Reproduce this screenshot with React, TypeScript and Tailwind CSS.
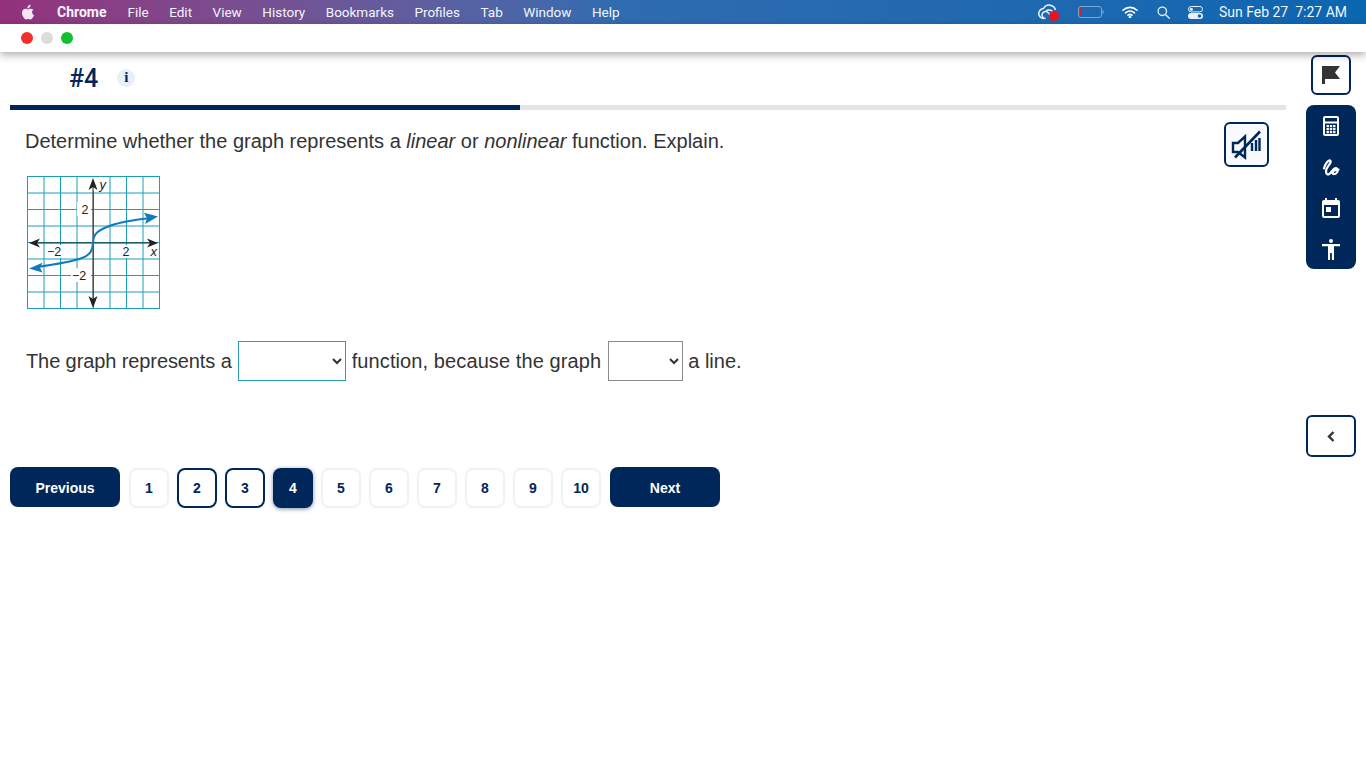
import React from 'react';

const pages = [1, 2, 3, 4, 5, 6, 7, 8, 9, 10];
const visited = [2, 3];
const current = 4;
const menus = ['File', 'Edit', 'View', 'History', 'Bookmarks', 'Profiles', 'Tab', 'Window', 'Help'];

const AppleLogo = () => (
  <svg width="14" height="16" viewBox="0 0 14 16" fill="#f3e6f0">
    <path d="M9.6 0.6c.1 1.1-.3 2-.9 2.7-.6.7-1.5 1.2-2.4 1.1-.1-1 .4-2 .9-2.6C7.800 1.100 8.800.7 9.600.6zM12.700 5.500c-1 .6-1.600 1.500-1.600 2.700 0 1.400.8 2.400 2 2.900-.3 1-.8 1.900-1.400 2.700-.6.800-1.200 1.600-2.100 1.600-.9 0-1.200-.5-2.300-.5-1.100 0-1.400.5-2.300.5-.9 0-1.500-.8-2.100-1.700C1.700 12.500 1 10.600 1 8.900c0-2.700 1.700-4.100 3.400-4.100.9 0 1.700.6 2.300.6.600 0 1.500-.7 2.600-.7 1 0 2 .4 3.400.8z" />
  </svg>
);

const StatusIcons = () => (
  <div className="flex items-center">
    {/* creative cloud with red dot */}
    <div className="relative w-[22px] h-[16px]">
      <svg width="22" height="16" viewBox="0 0 22 16" fill="none" stroke="#eef4fa" strokeWidth="1.500">
        <path d="M6 14.500a5 5 0 0 1-.5-10A6.500 6.500 0 0 1 17.500 6" />
        <path d="M7.500 14.500a3.500 3.500 0 1 1 2.800-5.600L13.500 12.500" />
        <path d="M8 7a5 5 0 0 1 7 1" />
      </svg>
      <span className="absolute right-[1px] bottom-[-1px] w-[10px] h-[10px] rounded-full bg-[#f01020]" />
    </div>
    {/* battery */}
    <svg className="ml-[18px]" width="27" height="12" viewBox="0 0 27 12" fill="none">
      <rect x="0.500" y="0.500" width="23" height="11" rx="2.500" stroke="#7fa8d0" />
      <rect x="2" y="2" width="2" height="8" fill="#d0222c" />
      <path d="M25 4.500v3" stroke="#7fa8d0" strokeWidth="1.200" />
    </svg>
    {/* wifi */}
    <svg className="ml-[17px]" width="16" height="12" viewBox="0 0 16 12" fill="none" stroke="#fff" strokeWidth="1.600" strokeLinecap="round">
      <path d="M1 4.200a10 10 0 0 1 14 0" />
      <path d="M3.500 6.800a6.500 6.500 0 0 1 9 0" />
      <path d="M6 9.200a3 3 0 0 1 4 0" />
      <circle cx="8" cy="11" r="0.600" fill="#fff" />
    </svg>
    {/* search */}
    <svg className="ml-[19px]" width="13" height="13" viewBox="0 0 13 13" fill="none" stroke="#e8f1f8" strokeWidth="1.300">
      <circle cx="5.300" cy="5.300" r="4.200" />
      <path d="M8.500 8.500l3.800 3.800" strokeLinecap="round" />
    </svg>
    {/* control centre */}
    <svg className="ml-[18px]" width="15" height="13" viewBox="0 0 15 13" fill="none">
      <rect x="0.500" y="0.500" width="14" height="5.400" rx="2.700" stroke="#e8f1f8" />
      <circle cx="3.400" cy="3.200" r="1.500" fill="#e8f1f8" />
      <rect x="0" y="7" width="15" height="6" rx="3" fill="#e8f1f8" />
      <circle cx="11.500" cy="10" r="1.800" fill="#0a66b0" />
    </svg>
  </div>
);

const Graph = () => {
  const lines = [2.500, 19, 35.500, 52, 68.500, 85, 101.500, 118, 134.500];
  return (
    <svg width="136" height="136" viewBox="0 0 136 136" className="block">
      {lines.map((p) => (
        <React.Fragment key={p}>
          <line x1={p} y1="1" x2={p} y2="133.500" stroke="#1b9fb6" strokeWidth="1" />
          <line x1="2" y1={p - 1} x2="135" y2={p - 1} stroke="#1b9fb6" strokeWidth="1" />
        </React.Fragment>
      ))}
      <rect x="58" y="2" width="20" height="14" fill="#fff" />
      <rect x="52" y="27" width="14" height="14" fill="#fff" />
      <rect x="20" y="70" width="22" height="13" fill="#fff" />
      <rect x="95" y="70" width="12" height="13" fill="#fff" />
      <rect x="122" y="70" width="11" height="13" fill="#fff" />
      <rect x="46" y="93" width="20" height="14" fill="#fff" />
      {/* axes */}
      <line x1="8" y1="68" x2="130" y2="68" stroke="#222" strokeWidth="1" />
      <line x1="68" y1="8" x2="68" y2="128" stroke="#222" strokeWidth="1" />
      <path d="M4 68l11-4.500-3 4.500 3 4.500z" fill="#222" />
      <path d="M133 68l-11-4.500 3 4.500-3 4.500z" fill="#222" />
      <path d="M68 3l-4.500 12 4.500-3 4.500 3z" fill="#222" />
      <path d="M68 133l-4.500-12 4.500 3 4.500-3z" fill="#222" />
      {/* curve */}
      <path
        d="M122 43.500C105 45.500 92 47.500 82 52 72 56 68.500 59 68 68 67.500 76 65 80 57 83 47 86.500 30 89.500 12 92"
        fill="none"
        stroke="#1279bd"
        strokeWidth="2"
      />
      <path d="M133 41.500l-14-3.800 3 5.600-1.800 5.800z" fill="#1279bd" />
      <path d="M4 93.500l13.500-5.800-2.500 5 2.500 4.800z" fill="#1279bd" />
      <g fontFamily='"Liberation Sans", Arial, sans-serif' fontSize="12.500" fill="#222">
        <text x="74.500" y="13.500" fontStyle="italic" fontSize="13">y</text>
        <text x="56.500" y="38.500">2</text>
        <text x="22" y="81">−2</text>
        <text x="97.500" y="81">2</text>
        <text x="125.500" y="81" fontStyle="italic" fontSize="13">x</text>
        <text x="47" y="104.500">−2</text>
      </g>
    </svg>
  );
};

const Calculator = () => (
  <svg width="16" height="20" viewBox="0 0 16 20" fill="#fff">
    <path fillRule="evenodd" d="M2 0h12a2 2 0 0 1 2 2v16a2 2 0 0 1-2 2H2a2 2 0 0 1-2-2V2a2 2 0 0 1 2-2zM2 2v3.500h12V2zM2 7.500V18h12V7.500z" />
    <path d="M3.500 9h2.400v2.200H3.500zM6.800 9h2.400v2.200H6.800zM10.100 9h2.400v2.200h-2.400zM3.500 12h2.400v2.200H3.500zM6.800 12h2.400v2.200H6.800zM10.100 12h2.400v2.200h-2.400zM3.500 15h2.400v2.200H3.500zM6.800 15h2.400v2.200H6.800zM10.100 15h2.400v2.200h-2.400z" />
  </svg>
);

const Squiggle = () => (
  <svg width="18" height="17" viewBox="0 0 18 17" fill="none" stroke="#fff" strokeWidth="2.200" strokeLinecap="round" strokeLinejoin="round">
    <path d="M2 9.500C3 5 6 1 8 1.500 10 2.500 7 6 5.500 8 3.500 11 3.500 15 6 15.500 8.500 15.500 10 11 12.500 9.500 15 8.500 16.500 11 15 13.500 13.500 15.800 10.500 15.500 10.500 13.500 10.500 11.500 13.500 11 16.500 10.500" />
  </svg>
);

const CalendarIcon = () => (
  <svg width="18" height="20" viewBox="0 0 18 20" fill="#fff">
    <path fillRule="evenodd" d="M3 0h2v2h8V0h2v2h1a2 2 0 0 1 2 2v14a2 2 0 0 1-2 2H2a2 2 0 0 1-2-2V4a2 2 0 0 1 2-2h1zM2 7v11h14V7z" />
    <rect x="4" y="9" width="5" height="5" />
  </svg>
);

const Person = () => (
  <svg width="18" height="21" viewBox="0 0 18 21" fill="#fff">
    <circle cx="9" cy="2" r="2" />
    <path d="M0 5h18v2.200h-6V21H9.900v-7H8.100v7H6V7.200H0z" />
  </svg>
);

const Flag = () => (
  <svg width="18" height="18" viewBox="0 0 18 18" fill="#333">
    <path d="M0 0h18l-5 6.500 5 6.500H3v5H0z" />
  </svg>
);

const MutedSpeaker = () => (
  <svg width="32" height="30" viewBox="0 0 32 30" fill="none" stroke="#00275a" strokeWidth="2.400">
    <path d="M2 13h5l7-6.500v21L7 22H2z" />
    <path d="M21 13v8M25 10v11M28.500 8v13" />
    <path d="M4 27.500L29 1.500" strokeWidth="2.600" />
  </svg>
);

export default function App() {
  return (
    <div className="w-[1366px] h-[768px] overflow-hidden bg-white font-['Liberation_Sans',Arial,sans-serif] text-[#333]">
      <div className="h-6 flex items-center justify-between bg-gradient-to-r from-[#93307c] via-[#2f6cb0] via-45% to-[#0a66b0] pl-[21px] pr-[19px] text-[14px] text-[#f2f5fa] font-['Roboto',sans-serif]">
        <div className="flex items-center">
          <AppleLogo />
          <span className="ml-[22px] font-bold">Chrome</span>
          <div className="flex ml-[21px] gap-[20.5px] text-[13.5px]">
            {menus.map((m) => (
              <span key={m}>{m}</span>
            ))}
          </div>
        </div>
        <div className="flex items-center gap-[16px]">
          <StatusIcons />
          <span>Sun Feb 27&nbsp; 7:27 AM</span>
        </div>
      </div>

      <div className="relative z-10 h-7 flex items-center gap-2 bg-white pl-[21px] shadow-[0_3px_8px_rgba(0,0,0,0.32)]">
        <span className="w-3 h-3 rounded-full bg-[#f0302c]" />
        <span className="w-3 h-3 rounded-full bg-[#dcdcdc]" />
        <span className="w-3 h-3 rounded-full bg-[#10c030]" />
      </div>

      <div className="flex">
        <div className="w-[1276px] ml-[10px]">
          <div className="h-[53px] flex items-center pl-[59px]">
            <span className="text-[25px] text-[#00275a] font-['Roboto',sans-serif] font-medium">#4</span>
            <span className="ml-[19px] mb-[2px] w-[18px] h-[18px] rounded-full bg-[#e8eff7] flex items-center justify-center text-[15px] font-bold text-[#00275a] font-['Liberation_Serif',serif]">i</span>
          </div>
          <div className="h-[5px] bg-[#e5e5e5]">
            <div className="h-full w-[510px] bg-[#00275a]" />
          </div>

          <div className="flex items-start justify-between pl-[15px] pr-[17px] pt-[12px]">
            <p className="text-[20px] leading-[28px] pt-[5px]">
              Determine whether the graph represents a <i>linear</i> or <i>nonlinear</i> function. Explain.
            </p>
            <button className="w-[45px] h-[45px] rounded-[6px] border-2 border-[#00275a] bg-[#f8fafd] flex items-center justify-center">
              <MutedSpeaker />
            </button>
          </div>

          <div className="pl-[15px] mt-[8px]">
            <Graph />
          </div>

          <div className="flex items-center pl-[16px] mt-[30px] text-[20px] h-10">
            <span className="tracking-[-0.1px]">The graph represents a</span>
            <select className="ml-[6px] w-[108px] h-10 border border-[#2a9fb5] bg-white px-1 text-[16px]" />
            <span className="ml-[6px] tracking-[0.1px]">function, because the graph</span>
            <select className="ml-[7px] w-[75px] h-10 border border-[#8a8a8a] bg-white px-1 text-[16px]" />
            <span className="ml-[5px]">a line.</span>
          </div>

          <div className="flex items-center mt-[85px]">
            <button className="w-[110px] h-10 pt-[1px] rounded-[8px] bg-[#00275a] text-white font-bold text-sm">Previous</button>
            <div className="flex gap-2 ml-[9px] mt-[2px]">
              {pages.map((p) => (
                <button
                  key={p}
                  className={
                    p === current
                      ? 'w-10 h-10 rounded-[8px] bg-[#00275a] text-white font-bold text-sm shadow-[0_1px_4px_rgba(5,38,79,0.5)]'
                      : visited.includes(p)
                        ? 'w-10 h-10 rounded-[8px] border-2 border-[#00275a] text-[#00275a] font-bold text-sm'
                        : 'w-10 h-10 rounded-[8px] border-2 border-[#f1f1f1] text-[#00275a] font-bold text-sm'
                  }
                >
                  {p}
                </button>
              ))}
            </div>
            <button className="ml-[9px] w-[110px] h-10 pt-[1px] rounded-[8px] bg-[#00275a] text-white font-bold text-sm">Next</button>
          </div>
        </div>

        <div className="w-[50px] ml-[20px] flex flex-col items-center pt-[3px]">
          <button className="w-10 h-10 rounded-[6px] border-2 border-[#00275a] bg-white flex items-center justify-center">
            <Flag />
          </button>
          <div className="w-[50px] h-[164px] mt-[10px] rounded-[8px] bg-[#00275a] flex flex-col items-center pt-[11px]">
            <Calculator />
            <div className="mt-[23px] flex">
              <Squiggle />
            </div>
            <div className="mt-[22px] flex">
              <CalendarIcon />
            </div>
            <div className="mt-[21px] flex">
              <Person />
            </div>
          </div>
          <button className="w-[50px] h-[42px] mt-[146px] rounded-[6px] border-2 border-[#00275a] bg-white flex items-center justify-center">
            <svg width="8" height="11" viewBox="0 0 8 11" fill="none" stroke="#333" strokeWidth="2.400">
              <path d="M6.500 1L2 5.500 6.500 10" />
            </svg>
          </button>
        </div>
      </div>
    </div>
  );
}
